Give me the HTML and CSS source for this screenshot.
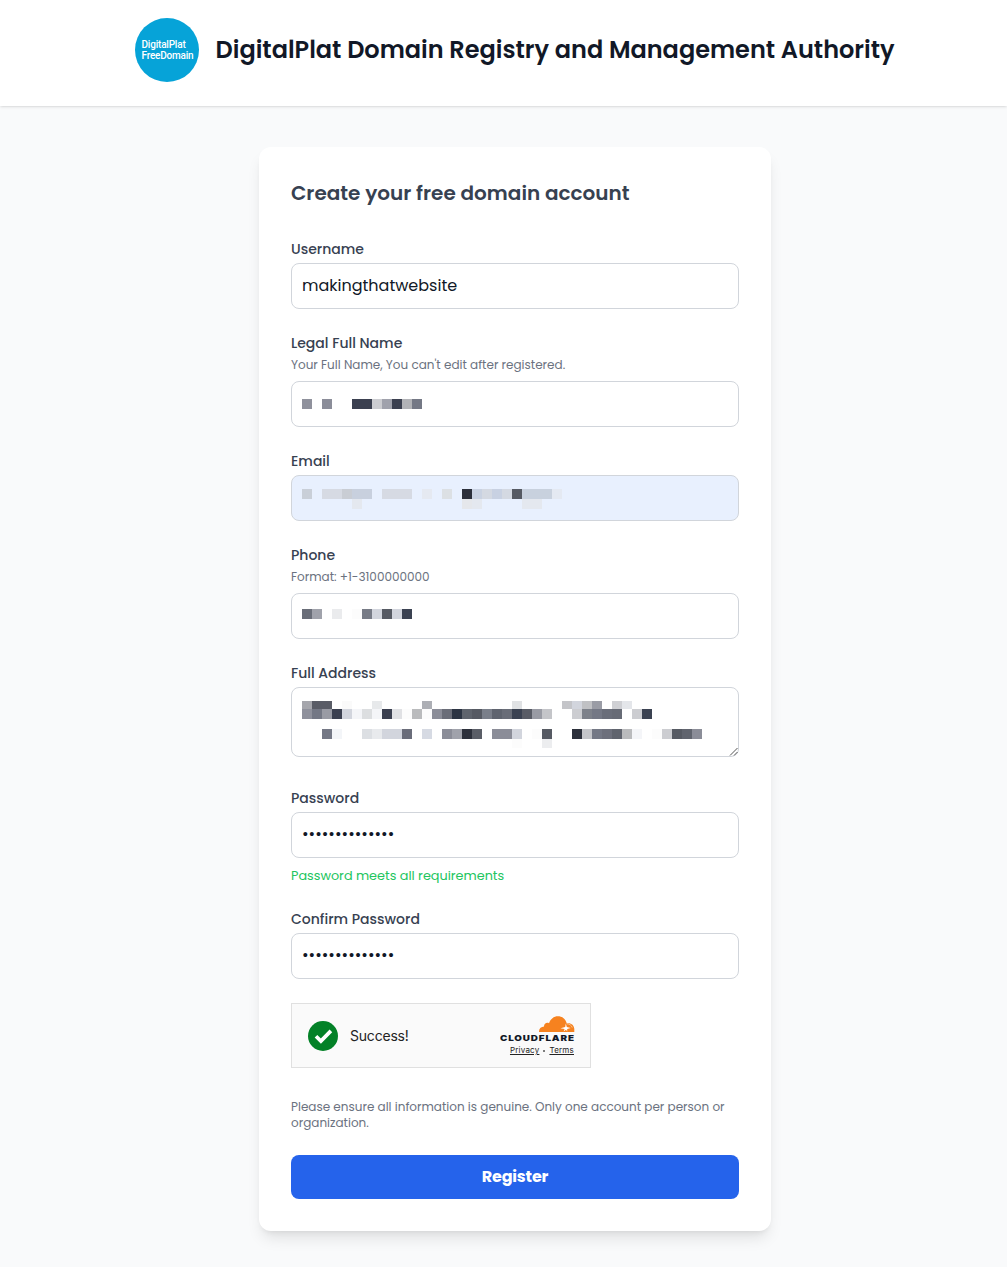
FILE: index.html
```html
<!DOCTYPE html>
<html lang="en">
<head>
    <meta charset="UTF-8">
    <meta name="viewport" content="width=device-width, initial-scale=1.0">
    <title>DigitalPlat Domain Registry</title>
    <link rel="stylesheet" href="styles.css">
</head>
<body>
    <header class="header">
        <div class="logo"><span>DigitalPlat</span><span>FreeDomain</span></div>
        <h1>DigitalPlat Domain Registry and Management Authority</h1>
    </header>
    <main>
        <form class="card" id="registerForm">
            <h2>Create your free domain account</h2>
            <div class="field">
                <label for="username">Username</label>
                <input type="text" id="username" value="makingthatwebsite">
            </div>
            <div class="field">
                <label>Legal Full Name</label>
                <div class="hint">Your Full Name, You can't edit after registered.</div>
                <div class="box"><svg class="mosaic" data-field="name" width="420" height="24"></svg></div>
            </div>
            <div class="field">
                <label>Email</label>
                <div class="box autofill"><svg class="mosaic" data-field="email" width="420" height="24"></svg></div>
            </div>
            <div class="field">
                <label>Phone</label>
                <div class="hint">Format: +1-3100000000</div>
                <div class="box"><svg class="mosaic" data-field="phone" width="420" height="24"></svg></div>
            </div>
            <div class="field address">
                <label>Full Address</label>
                <div class="box area">
                    <svg class="mosaic" data-field="address" width="420" height="50"></svg>
                    <svg class="grip" width="9" height="9" viewBox="0 0 9 9"><path d="M1 8.5L8.5 1M5 8.5L8.5 5" stroke="#555" fill="none"/></svg>
                </div>
            </div>
            <div class="field">
                <label for="password">Password</label>
                <input type="password" id="password" value="freedomain1234">
                <div class="success">Password meets all requirements</div>
            </div>
            <div class="field">
                <label for="confirm">Confirm Password</label>
                <input type="password" id="confirm" value="freedomain1234">
            </div>
            <div class="turnstile">
                <svg width="30" height="30" viewBox="0 0 30 30">
                    <circle cx="15" cy="15" r="15" fill="#038127"/>
                    <path d="M8 15.2L12.9 20.1L22.9 9.9" fill="none" stroke="#fff" stroke-width="3.7"/>
                </svg>
                <span class="turnstile-text">Success!</span>
                <div class="brand">
                    <svg width="36" height="17" viewBox="0 0 36 17">
                        <path d="M0 16C-.2 12.8 2 10.6 5.1 10.5C4.6 7.9 7.5 5.9 10 7.2C11.5 2.9 14.8.2 18.8.2C23.4.2 26.7 3 27.8 7.5C31.7 6.6 35.2 9.2 35.3 13V16Z" fill="#f6821f"/>
                        <path d="M26.8 7.6L26.2 11L21.5 12.2L25.6 13L24.6 15.6L27 13.8L28.2 15.4L28.2 13L31.8 12.1L27.8 11.1Z" fill="#fff"/>
                        <path d="M27.7 7.8C30.4 7.8 32.6 9.3 33.2 11.6" stroke="#fad0a5" stroke-width=".8" fill="none"/>
                    </svg>
                    <div class="brand-name">CLOUDFLARE</div>
                    <div class="links"><span>Privacy</span><i></i><span>Terms</span></div>
                </div>
            </div>
            <p class="notice">Please ensure all information is genuine. Only one account per person or organization.</p>
            <button type="submit">Register</button>
        </form>
    </main>
    <script src="mosaic.js"></script>
</body>
</html>
```

FILE: styles.css
```css
* {
    box-sizing: border-box;
}
body {
    margin: 0;
    background-color: #f9fafb;
    font-family: Poppins, Inter, sans-serif;
    color: #111827;
    overflow: hidden;
}
.header {
    display: flex;
    align-items: flex-start;
    gap: 16.5px;
    height: 106px;
    padding: 18px 0 0 135px;
    background-color: #fff;
    box-shadow: 0 1px 3px rgba(0,0,0,0.1), 0 1px 2px -1px rgba(0,0,0,0.1);
}
.logo {
    display: flex;
    flex-direction: column;
    justify-content: center;
    width: 64px;
    height: 64px;
    padding: 0 0 1px 6.5px;
    border-radius: 50%;
    background-color: #06a3d8;
    color: #fff;
    font: 500 10px/11px Roboto, sans-serif;
    letter-spacing: -0.2px;
}
h1 {
    margin: 0;
    font-size: 24px;
    font-weight: 600;
    line-height: 64px;
    white-space: nowrap;
}
main {
    padding: 41px 0 36px 23px;
}
.card {
    width: 512px;
    height: 1084px;
    margin: 0 auto;
    padding: 32px;
    background-color: #fff;
    border-radius: 12px;
    box-shadow: 0 10px 15px -3px rgba(0,0,0,0.1), 0 4px 6px -4px rgba(0,0,0,0.1);
}
h2 {
    margin: 0 0 32px;
    color: #374151;
    font-size: 20px;
    font-weight: 600;
    line-height: 28px;
}
.field {
    margin-bottom: 24px;
}
label {
    display: block;
    margin-bottom: 4px;
    color: #374151;
    font-size: 14px;
    font-weight: 500;
    line-height: 20px;
}
.hint {
    margin-bottom: 8px;
    color: #6b7280;
    font-size: 12px;
    line-height: 16px;
}
input,
.box {
    display: block;
    width: 100%;
    height: 46px;
    padding: 10px;
    border: 1px solid #d1d5db;
    border-radius: 8px;
    background-color: #fff;
    color: #111827;
    font-family: inherit;
    font-size: 16px;
    line-height: 24px;
}
input {
    padding: 9px 10px 11px;
}
input[type="password"] {
    padding: 8px 10px 12px;
}
.autofill {
    background-color: #e8f0fe;
}
.area {
    position: relative;
    height: 70px;
}
.address {
    margin-bottom: 31px;
}
.mosaic {
    display: block;
    shape-rendering: crispEdges;
}
.grip {
    position: absolute;
    right: 0;
    bottom: 0;
}
.success {
    margin-top: 8px;
    color: #22c55e;
    font-size: 12.8px;
    line-height: 19px;
}
.turnstile {
    display: flex;
    align-items: center;
    width: 300px;
    height: 65px;
    padding: 0 15px 0 16px;
    border: 1px solid #e0e0e0;
    background-color: #fafafa;
}
.turnstile-text {
    margin-left: 12px;
    color: #232323;
    font: 400 14px/20px Inter, sans-serif;
    letter-spacing: -0.2px;
}
.brand {
    display: flex;
    flex-direction: column;
    align-items: flex-end;
    margin-left: auto;
}
/* wide lettering, stretched sideways from the right edge */
.brand-name {
    color: #111827;
    font: 900 8px/10px Inter, sans-serif;
    letter-spacing: 0.7px;
    transform: scaleX(1.23);
    transform-origin: right;
}
.links {
    display: flex;
    align-items: center;
    margin-top: 3px;
    margin-right: 1px;
    color: #232323;
    font: 400 8px/9px Inter, sans-serif;
    letter-spacing: 0.2px;
}
.links span {
    text-decoration: underline;
    text-underline-offset: 1px;
}
.links i {
    width: 2px;
    height: 2px;
    margin: 0 4px;
    border-radius: 50%;
    background-color: #555;
}
.notice {
    margin: 31px 0 24px;
    color: #6b7280;
    font-size: 12px;
    line-height: 16px;
}
button {
    display: block;
    width: 100%;
    height: 44px;
    padding: 0 0 2px;
    border: none;
    border-radius: 8px;
    background-color: #2563eb;
    color: #fff;
    font-family: inherit;
    font-size: 16px;
    font-weight: 700;
    letter-spacing: -0.2px;
    cursor: pointer;
}
```

FILE: mosaic.js
```js
// Redacted values: each row has a y, a height and [column, colour] cells 10px wide
const rows = {
    name: [
        [7, 10, '0 8f919c,2 8b8d99,5 3b4050,6 3b4050,7 cccdd1,8 a0a2ac,9 3b4050,10 b2b3b7,11 747885']
    ],
    email: [
        [3, 10, '0 c9cfd8,2 d6dae3,3 d6dae3,4 c9cdd4,5 c8d0de,6 c8d0de,8 d6dae3,9 d6dae3,10 d6dae3,12 e5e9f1,14 dce0e4,16 2c303b,17 c9d2e2,18 d4d9e2,19 c8d1e2,20 d4d9e2,21 565a63,22 c8d1de,23 c8d1de,24 c8d1de,25 e4e9f2'],
        [13, 10, '5 e4e8ef,16 e5e7eb,17 e4e8ef,22 e4e8ef,23 e4e8ef']
    ],
    phone: [
        [5, 10, '0 696d78,1 a0a2ab,3 eaebed,5 fcfcfc,6 777b86,7 d2d5dd,8 565a63,9 d2d5dd,10 3b4252']
    ],
    address: [
        [3, 8, '0 a5a6ac,1 595c66,2 595c66,4 fafafa,7 e7e9eb,12 adafb5,21 e0e2e4,26 c4c5c9,27 d2d5dd,28 c0c1c4,29 9a9ca5,31 cfd0d4,32 e4e6ea'],
        [11, 10, '0 8f919c,1 747885,2 999ba4,3 3b4050,4 d2d5dd,5 f4f5f8,6 dcdee0,7 f4f5f8,8 3b4050,9 e0e1e4,10 fcfcfc,11 babbbd,12 fcfcfc,13 8b8d98,14 6a6d78,15 2c3443,16 5f646d,17 565a63,18 7a7f8a,19 5f646f,20 696d78,21 3b4252,22 595c66,23 999ba4,24 c4c5c9,27 cccdd1,28 7d818a,29 747885,30 6a6e7a,31 676b76,33 cccdd1,34 3b4252'],
        [31, 10, '2 747885,3 f3f5f8,6 dcdfe3,7 e8eaed,8 d2d5dd,9 d2d5dd,10 6a6d7a,12 d6dae3,14 8b8d98,15 a0a2ab,16 2c303b,17 5a5e67,19 8b8d98,20 8b8d98,21 d2d5dd,23 fcfcfc,24 565a63,27 2c303b,28 c4c5c9,29 747885,30 6d707c,31 60646e,32 babbbd,33 f4f5f8,35 fcfcfc,36 cccdd1,37 565a63,38 60646e,39 8b8d98'],
        [41, 9, '21 fcfcfc,24 ecedef']
    ]
};

document.querySelectorAll('.mosaic').forEach(svg => {
    svg.innerHTML = rows[svg.dataset.field].map(([y, height, cells]) =>
        cells.split(',').map(cell => {
            const [col, color] = cell.split(' ');
            return `<rect x="${col * 10}" y="${y}" width="10" height="${height}" fill="#${color}"/>`;
        }).join('')
    ).join('');
});
```
